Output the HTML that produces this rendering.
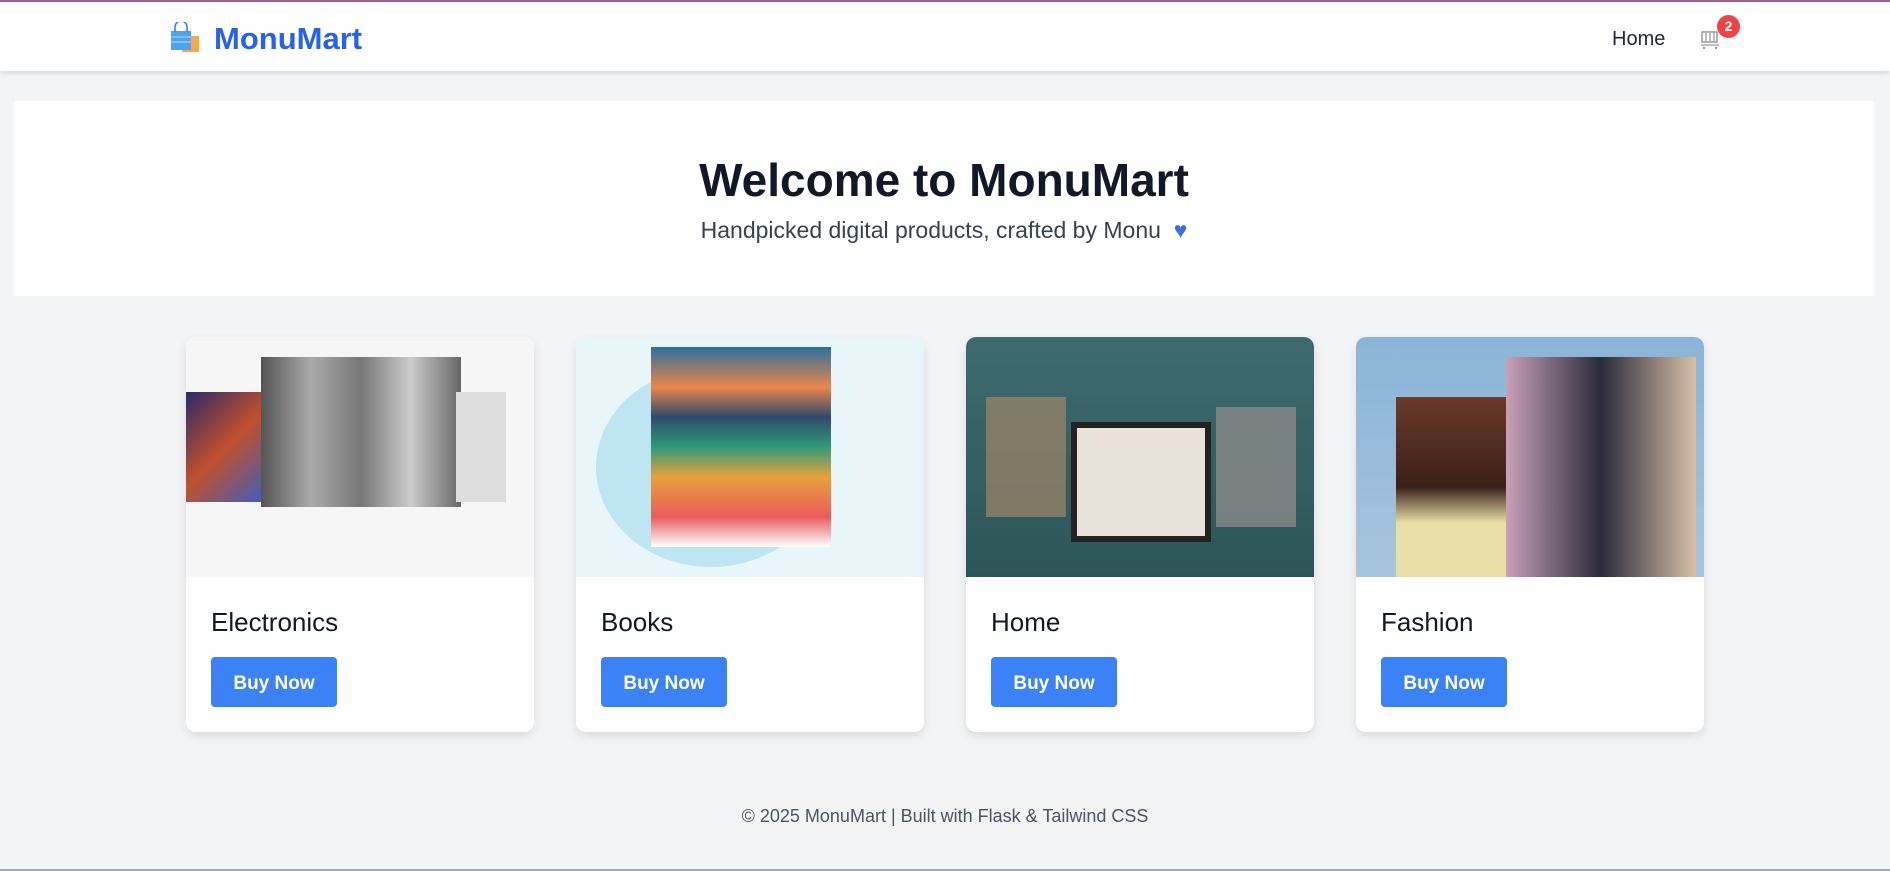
<!DOCTYPE html>
<html><head><meta charset="utf-8"><style>
*{box-sizing:border-box;margin:0;padding:0}
body{width:1890px;height:871px;background:#f3f4f6;font-family:"Liberation Sans","DejaVu Sans",sans-serif;position:relative;overflow:hidden}
.nav{position:absolute;left:0;top:0;width:1890px;height:71px;background:#fff;border-top:2px solid #a0609a;box-shadow:0 2px 5px rgba(0,0,0,.12)}
.logo{position:absolute;left:214px;top:19px;font-size:31px;font-weight:bold;color:#2563eb}
.home{position:absolute;left:1612px;top:26px;font-size:20px;color:#1f2937}
.badge{position:absolute;left:1717px;top:13px;width:23px;height:23px;border-radius:50%;background:#ef4444;color:#fff;font-size:14px;font-weight:bold;text-align:center;line-height:23px}
.hero{position:absolute;left:14px;top:101px;width:1860px;height:195px;background:#fff;text-align:center}
.hero h1{position:absolute;top:52px;width:100%;font-size:46px;font-weight:bold;color:#111827}
.hero p{position:absolute;top:116px;width:100%;font-size:23px;color:#374151}
.card{position:absolute;top:337px;width:348px;height:395px;background:#fff;border-radius:10px;overflow:hidden;box-shadow:0 4px 10px rgba(0,0,0,.1)}
.img{height:240px}
.card h3{position:absolute;left:25px;top:270px;font-size:26px;font-weight:normal;color:#111827}
.btn{position:absolute;left:25px;top:320px;width:126px;height:50px;background:#3b82f6;border-radius:4px;color:#fff;font-weight:bold;font-size:19px;text-align:center;line-height:54px}
.foot{position:absolute;top:806px;width:100%;text-align:center;font-size:18px;color:#4b5563}
</style></head><body>
<div class="nav">
<svg style="position:absolute;left:169px;top:20px" width="32" height="32" viewBox="0 0 32 32"><rect x="13" y="14" width="17" height="16" fill="#f5a94a"/><rect x="2" y="9" width="20" height="19" fill="#4fa3ec"/><path d="M6 10V5a6 6 0 0 1 12 0v5" fill="none" stroke="#3b82f6" stroke-width="1.6"/><path d="M2 15h20M2 20h20" stroke="#7cc0f5" stroke-width="2"/></svg>
<div class="logo">MonuMart</div>
<div class="home">Home</div>
<svg style="position:absolute;left:1700px;top:27px" width="22" height="22" viewBox="0 0 22 22"><rect x="2" y="3" width="15" height="10" fill="none" stroke="#999" stroke-width="1.5"/><path d="M6 3v10M10 3v10M14 3v10M1 16h18" stroke="#aaa" stroke-width="1.5"/><path d="M4 18v2M16 18v2" stroke="#3b6fd0" stroke-width="1.5"/></svg>
<div class="badge">2</div>
</div>
<div class="hero"><h1>Welcome to MonuMart</h1><p>Handpicked digital products, crafted by Monu &nbsp;<span style="color:#3b6fe0">&#9829;</span></p></div>

<div class="card" style="left:186px"><div class="img" style="background:#f6f6f6;position:relative"><div style="position:absolute;left:0;top:55px;width:80px;height:110px;background:linear-gradient(135deg,#2b2a6a,#c0502a,#3a60c0)"></div><div style="position:absolute;left:75px;top:20px;width:200px;height:150px;background:linear-gradient(90deg,#555,#aaa,#777,#ccc,#666)"></div><div style="position:absolute;left:270px;top:55px;width:50px;height:110px;background:#ddd"></div></div><h3>Electronics</h3><div class="btn">Buy Now</div></div>
<div class="card" style="left:576px"><div class="img" style="background:#e8f6fa;position:relative"><div style="position:absolute;left:20px;top:30px;width:230px;height:200px;border-radius:50%;background:#bde6f2"></div><div style="position:absolute;left:75px;top:10px;width:180px;height:200px;background:linear-gradient(180deg,#2a6f9e 0%,#e9864a 20%,#2f4a6a 35%,#2f9a7a 50%,#e8a23a 65%,#e85d5d 85%,#fff 100%)"></div></div><h3>Books</h3><div class="btn">Buy Now</div></div>
<div class="card" style="left:966px"><div class="img" style="background:linear-gradient(180deg,#3d6b6e,#2d5558);position:relative"><div style="position:absolute;left:105px;top:85px;width:140px;height:120px;background:#e8e2d8;border:6px solid #222"></div><div style="position:absolute;left:20px;top:60px;width:80px;height:120px;background:#a08468;opacity:.7"></div><div style="position:absolute;left:250px;top:70px;width:80px;height:120px;background:#8a8a88;opacity:.8"></div></div><h3>Home</h3><div class="btn">Buy Now</div></div>
<div class="card" style="left:1356px"><div class="img" style="background:linear-gradient(180deg,#8ab4d8,#a8c4dc);position:relative"><div style="position:absolute;left:40px;top:60px;width:140px;height:180px;background:linear-gradient(180deg,#6b3a2a,#3a2018 50%,#e8e0a8 70%)"></div><div style="position:absolute;left:150px;top:20px;width:190px;height:220px;background:linear-gradient(90deg,#c8a0b8,#2a2a3a 50%,#d8c0a8)"></div></div><h3>Fashion</h3><div class="btn">Buy Now</div></div>

<div class="foot">© 2025 MonuMart | Built with Flask &amp; Tailwind CSS</div>
<div style="position:absolute;left:0;top:869px;width:1890px;height:2px;background:#9ab"></div>
</body></html>
